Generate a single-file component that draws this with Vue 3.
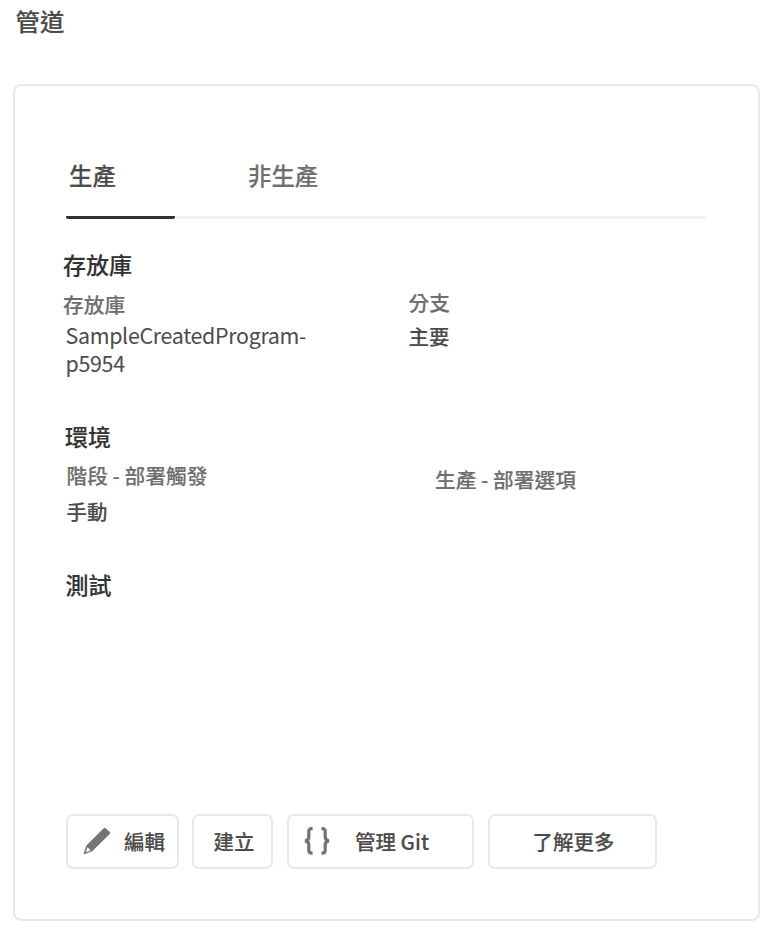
<script setup>
import { ref } from 'vue'

const tabs = ['生產', '非生產']
const active = ref(0)
</script>

<template>
  <main class="page">
    <h1 class="title">管道</h1>
    <section class="card">
      <nav class="tabs">
        <button
          v-for="(tab, i) in tabs"
          :key="tab"
          class="tab"
          :class="{ active: active === i }"
          @click="active = i"
        >{{ tab }}</button>
      </nav>

      <div class="group repository">
        <h2 class="heading">存放庫</h2>
        <div class="fields">
          <div class="field name">
            <span class="label">存放庫</span>
            <span class="value latin">SampleCreatedProgram-<br>p5954</span>
          </div>
          <div class="field branch">
            <span class="label">分支</span>
            <span class="value">主要</span>
          </div>
        </div>
      </div>

      <div class="group environment">
        <h2 class="heading">環境</h2>
        <div class="fields">
          <div class="field stage">
            <span class="label">階段 - 部署觸發</span>
            <span class="value">手動</span>
          </div>
          <div class="field production">
            <span class="label">生產 - 部署選項</span>
          </div>
        </div>
      </div>

      <div class="group testing">
        <h2 class="heading">測試</h2>
      </div>

      <footer class="actions">
        <button class="action edit">
          <svg class="pencil" width="28" height="28" viewBox="0 0 28 28">
            <path fill="#747474" fill-rule="evenodd" d="M20.7 1.3Q21.7.3 22.7 1.3L26.7 5.1Q27.7 6.1 26.7 7.1L9.3 24.3L1.2 27.2Q.4 27.4.7 26.5L3.4 18.6ZM4.5 20.3L2.8 25.2L7.7 23.6Z" />
          </svg>
          <span>編輯</span>
        </button>
        <button class="action create"><span>建立</span></button>
        <button class="action git">
          <svg class="braces" width="26" height="28" viewBox="0 0 26 28" fill="none" stroke="#747474" stroke-width="3.2">
            <path d="M8.6 1.7H7.7Q4.8 1.7 4.8 4.7V10Q4.8 13.4 1 13.9Q4.8 14.4 4.8 17.8V23.2Q4.8 26.2 7.7 26.2H8.6" />
            <path d="M17.4 1.7H18.3Q21.2 1.7 21.2 4.7V10Q21.2 13.4 25 13.9Q21.2 14.4 21.2 17.8V23.2Q21.2 26.2 18.3 26.2H17.4" />
          </svg>
          <span>管理 Git</span>
        </button>
        <button class="action more"><span>了解更多</span></button>
      </footer>
    </section>
  </main>
</template>

<style>
body {
  background: #fff;
}
</style>

<style scoped>
.page {
  box-sizing: border-box;
  height: 932px;
  padding: 7px 8px 11px 13px;
  display: flex;
  flex-direction: column;
  font-family: "Noto Sans CJK TC", sans-serif;
  font-weight: 500;
  color: #4b4b4b;
  -webkit-text-stroke: 0.15px currentColor;
}
button {
  font: inherit;
  color: inherit;
  background: none;
  margin: 0;
  padding: 0;
}
h1,
h2 {
  margin: 0;
  font-weight: 500;
  line-height: 28px;
}
.title {
  padding-left: 2.5px;
  font-size: 24.4px;
}
.card {
  box-sizing: border-box;
  width: 747px;
  height: 837px;
  margin-top: 49px;
  padding: 75px 51px 50px;
  border: 2px solid #e8e8e8;
  border-radius: 8px;
  display: flex;
  flex-direction: column;
}
.tabs {
  display: flex;
  gap: 70px;
  height: 58px;
  width: 641px;
  background: linear-gradient(#f3f3f3, #f3f3f3) bottom / 100% 3px no-repeat;
  border-radius: 2px;
}
.tab {
  width: 109px;
  padding-left: 3px;
  border: 0;
  border-bottom: 3px solid transparent;
  border-radius: 2px;
  display: flex;
  font-size: 23.4px;
  line-height: 28px;
  white-space: nowrap;
  color: #6e6e6e;
}
.tab.active {
  color: #4b4b4b;
  background: linear-gradient(#323232, #323232) bottom / 100% 3px no-repeat border-box;
}
.heading {
  font-size: 23px;
  color: #323232;
}
.fields {
  display: flex;
}
.field {
  box-sizing: border-box;
  display: flex;
  flex-direction: column;
}
.label,
.value {
  font-size: 20.4px;
  line-height: 24px;
  white-space: nowrap;
}
.label {
  font-size: 20.7px;
  color: #6e6e6e;
}
.repository {
  margin: 31px 0 0 -3px;
  height: 172px;
}
.name {
  width: 345.5px;
  padding-top: 14px;
}
.value.latin {
  font-size: 21.4px;
  font-weight: 400;
  line-height: 28px;
  letter-spacing: -0.31px;
  margin: 5px 0 0 2.5px;
  -webkit-text-stroke: 0;
}
.branch {
  padding-top: 12px;
  gap: 10px;
}
.environment {
  margin-left: -1px;
  height: 148px;
}
.stage {
  width: 370px;
  padding: 13px 0 0 1.5px;
  gap: 12px;
}
.production {
  padding-top: 17px;
}
.testing {
  margin-left: -0.5px;
}
.actions {
  margin-top: auto;
  display: flex;
}
.action {
  box-sizing: border-box;
  height: 55px;
  padding-bottom: 2px;
  border: 2px solid #e8e8e8;
  border-radius: 7px;
  display: flex;
  align-items: center;
  font-size: 20.5px;
  line-height: 24px;
  white-space: nowrap;
}
.action svg {
  flex: none;
  margin-top: 1px;
}
.edit {
  width: 113px;
  padding-left: 15px;
  gap: 13px;
}
.create {
  width: 81px;
  margin-left: 13px;
  padding-left: 3px;
  justify-content: center;
}
.git {
  width: 187px;
  margin-left: 14px;
  padding-left: 15px;
  gap: 25px;
}
.more {
  width: 169px;
  margin-left: 14px;
  padding-left: 2px;
  justify-content: center;
}
</style>
